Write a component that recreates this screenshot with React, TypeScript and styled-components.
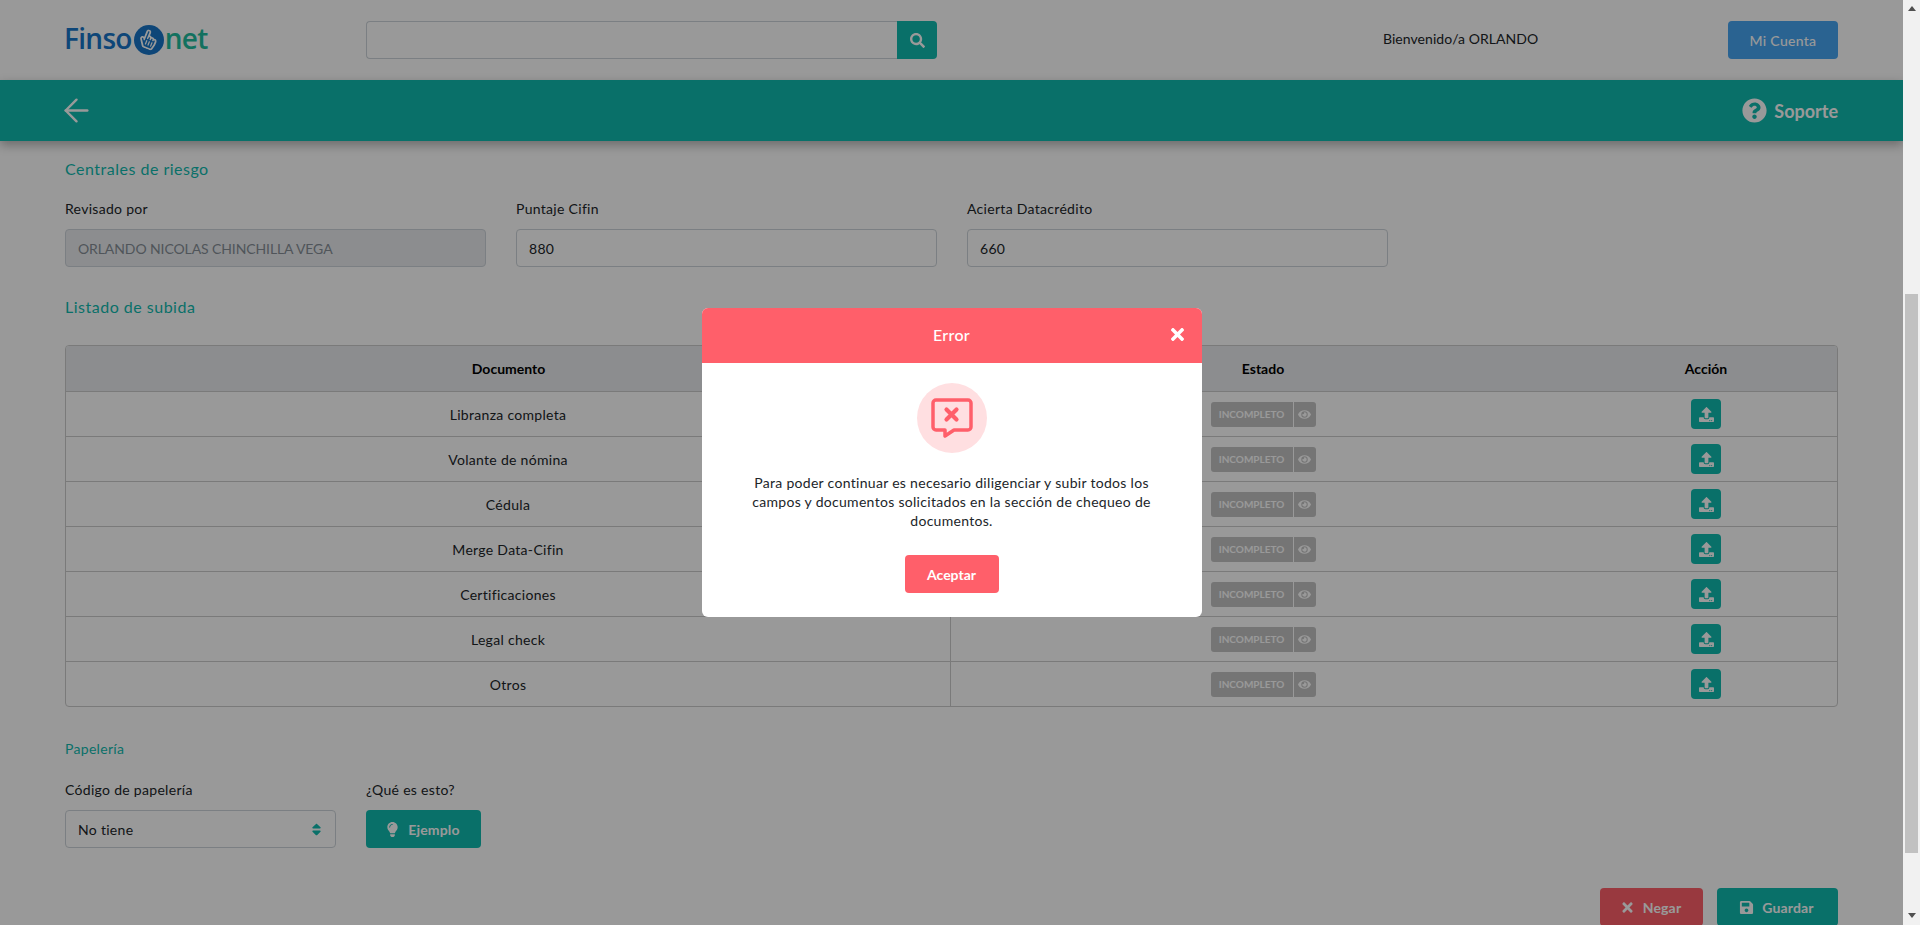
import styled, { createGlobalStyle } from "styled-components";
import {
  FaEye,
  FaLightbulb,
  FaQuestionCircle,
  FaRegHandPointer,
  FaSave,
  FaSearch,
  FaSort,
  FaTimes,
  FaUpload,
} from "react-icons/fa";
import { ArrowLeft } from "lucide-react";

const TEAL = "#0fbbaf";
const RED = "#ff5f6a";

const documents = [
  "Libranza completa",
  "Volante de nómina",
  "Cédula",
  "Merge Data-Cifin",
  "Certificaciones",
  "Legal check",
  "Otros",
];

const App = () => (
  <>
    <GlobalStyle />
    <Window>
      <Page>
        <Header>
          <Logo>
            <LogoBlue>Finso</LogoBlue>
            <LogoBadge>
              <FaRegHandPointer />
            </LogoBadge>
            <LogoGreen>net</LogoGreen>
          </Logo>
          <SearchBox>
            <SearchInput />
            <SearchButton>
              <FaSearch />
            </SearchButton>
          </SearchBox>
          <Welcome>Bienvenido/a ORLANDO</Welcome>
          <AccountButton>Mi Cuenta</AccountButton>
        </Header>

        <TealBar>
          <ArrowLeft size={37} strokeWidth={1.6} color="#fff" />
          <Support>
            <FaQuestionCircle />
            Soporte
          </Support>
        </TealBar>

        <Content>
          <SectionTitle>Centrales de riesgo</SectionTitle>
          <FieldRow>
            <Field>
              <Label>Revisado por</Label>
              <Input $disabled>ORLANDO NICOLAS CHINCHILLA VEGA</Input>
            </Field>
            <Field>
              <Label>Puntaje Cifin</Label>
              <Input>880</Input>
            </Field>
            <Field>
              <Label>Acierta Datacrédito</Label>
              <Input>660</Input>
            </Field>
          </FieldRow>

          <SectionTitle $second>Listado de subida</SectionTitle>
          <Table>
            <HeadRow>
              <HeadCell>Documento</HeadCell>
              <HeadCell>Estado</HeadCell>
              <HeadCell>Acción</HeadCell>
            </HeadRow>
            {documents.map((name) => (
              <Row key={name}>
                <NameCell>{name}</NameCell>
                <Cell>
                  <Badge>
                    <BadgeText>INCOMPLETO</BadgeText>
                    <BadgeEye>
                      <FaEye />
                    </BadgeEye>
                  </Badge>
                </Cell>
                <Cell>
                  <UploadButton>
                    <FaUpload />
                  </UploadButton>
                </Cell>
              </Row>
            ))}
          </Table>

          <SmallTitle>Papelería</SmallTitle>
          <PaperRow>
            <SelectField>
              <Label>Código de papelería</Label>
              <Select>
                No tiene
                <SelectArrows>
                  <FaSort />
                </SelectArrows>
              </Select>
            </SelectField>
            <div>
              <Label>¿Qué es esto?</Label>
              <ActionButton $color={TEAL} $width={115}>
                <FaLightbulb />
                Ejemplo
              </ActionButton>
            </div>
          </PaperRow>

          <Footer>
            <ActionButton $color={RED} $width={103}>
              <FaTimes />
              Negar
            </ActionButton>
            <ActionButton $color={TEAL} $width={121}>
              <FaSave />
              Guardar
            </ActionButton>
          </Footer>
        </Content>

        <Backdrop>
          <Modal>
            <ModalHead>
              Error
              <CloseIcon>
                <FaTimes />
              </CloseIcon>
            </ModalHead>
            <ModalBody>
              <ErrorCircle>
                <svg width="70" height="70" viewBox="0 0 70 70" fill="none">
                  <path
                    d="M19 17h32a3 3 0 0 1 3 3v24a3 3 0 0 1-3 3H37l-9 6v-6h-9a3 3 0 0 1-3-3V20a3 3 0 0 1 3-3z"
                    stroke={RED}
                    strokeWidth="3.5"
                    strokeLinejoin="round"
                  />
                  <path
                    d="M29.5 26.5l10 10M39.5 26.5l-10 10"
                    stroke={RED}
                    strokeWidth="4.2"
                    strokeLinecap="round"
                  />
                </svg>
              </ErrorCircle>
              <ModalText>
                Para poder continuar es necesario diligenciar y subir todos los
                campos y documentos solicitados en la sección de chequeo de
                documentos.
              </ModalText>
              <AcceptButton>Aceptar</AcceptButton>
            </ModalBody>
          </Modal>
        </Backdrop>
      </Page>

      <Scrollbar>
        <ArrowUp />
        <Thumb />
        <ArrowDown />
      </Scrollbar>
    </Window>
  </>
);

export default App;

const GlobalStyle = createGlobalStyle`
  * { box-sizing: border-box; }
  html, body { margin: 0; height: 100%; overflow: hidden; }
  body {
    font-family: "Lato", "Open Sans", sans-serif;
    font-size: 14px;
    letter-spacing: 0.3px;
    color: #212529;
    background: #fff;
  }
`;

const Window = styled.div`
  display: flex;
  height: 925px;
`;

const Page = styled.div`
  position: relative;
  flex: 1;
  min-width: 0;
  overflow: hidden;
`;

const Header = styled.header`
  display: flex;
  align-items: center;
  height: 80px;
  padding: 0 65px;
`;

const Logo = styled.div`
  display: flex;
  align-items: center;
  width: 302px;
  margin-top: -5px;
  margin-left: -1px;
  font-family: "Open Sans", sans-serif;
  font-size: 28px;
  font-weight: 600;
  letter-spacing: -0.7px;
`;

const LogoBlue = styled.span`
  color: #1876c8;
`;

const LogoGreen = styled.span`
  color: #1ebd9e;
`;

const LogoBadge = styled.span`
  display: flex;
  align-items: center;
  justify-content: center;
  width: 30px;
  height: 30px;
  margin: 0 1px 0 2px;
  border-radius: 50%;
  background: #1876c8;
  color: #fff;
  font-size: 19px;
  transform: translateY(2px);

  svg {
    transform: rotate(22deg);
  }
`;

const SearchBox = styled.div`
  display: flex;
  width: 571px;
  height: 38px;
`;

const SearchInput = styled.div`
  flex: 1;
  border: 1px solid #ced4da;
  border-right: 0;
  border-radius: 4px 0 0 4px;
  background: #fff;
`;

const SearchButton = styled.div`
  display: flex;
  align-items: center;
  justify-content: center;
  width: 40px;
  border-radius: 0 4px 4px 0;
  background: ${TEAL};
  color: #fff;
  font-size: 15px;
`;

const Welcome = styled.span`
  margin-left: 446px;
  margin-top: -3px;
  font-size: 14px;
  letter-spacing: 0.05px;
  color: #212529;
`;

const AccountButton = styled.button`
  width: 110px;
  height: 38px;
  margin-left: auto;
  border: 0;
  border-radius: 4px;
  background: #46a6f2;
  color: #fff;
  font: inherit;
  letter-spacing: 0.3px;
  font-weight: 500;
`;

const TealBar = styled.div`
  display: flex;
  align-items: center;
  justify-content: space-between;
  height: 61px;
  padding: 0 65px 0 58px;
  background: ${TEAL};
  box-shadow: 0 4px 10px rgba(0, 0, 0, 0.3);
`;

const Support = styled.div`
  display: flex;
  align-items: center;
  gap: 7px;
  color: #fff;
  font-size: 18px;
  font-weight: 700;
  letter-spacing: 0;

  svg {
    font-size: 25px;
  }
`;

const Content = styled.main`
  padding: 0 65px;
`;

const SectionTitle = styled.h2<{ $second?: boolean }>`
  margin: ${(p) => (p.$second ? "30px 0 28px" : "18px 0 20px")};
  font-size: 16px;
  line-height: 20px;
  font-weight: 400;
  letter-spacing: 0.5px;
  color: ${TEAL};
`;

const SmallTitle = styled.h3`
  margin: 33px 0 22px;
  font-size: 14px;
  line-height: 18px;
  font-weight: 400;
  color: ${TEAL};
`;

const FieldRow = styled.div`
  display: flex;
  gap: 30px;
`;

const Field = styled.div`
  width: 421px;
`;

const Label = styled.div`
  height: 20px;
  margin-bottom: 10px;
  font-size: 14px;
  line-height: 20px;
  color: #212529;
`;

const Input = styled.div<{ $disabled?: boolean }>`
  display: flex;
  align-items: center;
  height: 38px;
  padding: 0 12px;
  border: 1px solid #ced4da;
  border-radius: 4px;
  background: ${(p) => (p.$disabled ? "#e9ecef" : "#fff")};
  color: ${(p) => (p.$disabled ? "#868e96" : "#212529")};
  font-size: 14px;
  letter-spacing: ${(p) => (p.$disabled ? "-0.1px" : "0.3px")};
`;

const Table = styled.div`
  border: 1px solid #ccc;
  border-radius: 4px;
  overflow: hidden;
`;

const columns = "885px 624px 1fr";

const HeadRow = styled.div`
  display: grid;
  grid-template-columns: ${columns};
  height: 46px;
  background: #e9ecef;
  border-bottom: 1px solid #ccc;
`;

const HeadCell = styled.div`
  display: flex;
  align-items: center;
  justify-content: center;
  font-size: 14px;
  font-weight: 700;
  letter-spacing: 0;
  color: #000;
`;

const Row = styled.div`
  display: grid;
  grid-template-columns: ${columns};
  height: 45px;
  border-bottom: 1px solid #ccc;

  &:last-child {
    height: 44px;
    border-bottom: 0;
  }
`;

const Cell = styled.div`
  display: flex;
  align-items: center;
  justify-content: center;
  font-size: 14px;
  color: #212529;
`;

const NameCell = styled(Cell)`
  border-right: 1px solid #ccc;
`;

const Badge = styled.div`
  display: flex;
  gap: 1px;
  height: 25px;
`;

const BadgeText = styled.span`
  display: flex;
  align-items: center;
  justify-content: center;
  width: 82px;
  border-radius: 3px 0 0 3px;
  background: #c4c4c4;
  color: #fff;
  font-size: 10px;
  font-weight: 700;
  letter-spacing: 0;
`;

const BadgeEye = styled.span`
  display: flex;
  align-items: center;
  justify-content: center;
  width: 22px;
  border-radius: 0 3px 3px 0;
  background: #c4c4c4;
  color: #fff;
  font-size: 13px;
`;

const UploadButton = styled.div`
  display: flex;
  align-items: center;
  justify-content: center;
  width: 30px;
  height: 30px;
  border-radius: 4px;
  background: ${TEAL};
  color: #fff;
  font-size: 15px;
`;

const PaperRow = styled.div`
  display: flex;
  gap: 30px;
`;

const SelectField = styled.div`
  width: 271px;
`;

const Select = styled.div`
  display: flex;
  align-items: center;
  justify-content: space-between;
  height: 38px;
  padding: 0 11px 0 12px;
  border: 1px solid #ced4da;
  border-radius: 4px;
  background: #fff;
  font-size: 14px;
`;

const SelectArrows = styled.span`
  display: flex;
  color: ${TEAL};
  font-size: 15px;
`;

const ActionButton = styled.button<{ $color: string; $width: number }>`
  display: flex;
  align-items: center;
  justify-content: center;
  gap: 8px;
  width: ${(p) => p.$width}px;
  height: 38px;
  padding: 0 2px 0 0;
  border: 0;
  border-radius: 4px;
  background: ${(p) => p.$color};
  color: #fff;
  font: inherit;
  font-weight: 700;
  letter-spacing: 0.15px;

  svg {
    font-size: 15px;
  }
`;

const Footer = styled.div`
  display: flex;
  justify-content: flex-end;
  gap: 14px;
  margin-top: 40px;
`;

const Backdrop = styled.div`
  position: absolute;
  inset: 0;
  display: flex;
  justify-content: center;
  align-items: flex-start;
  padding-top: 308px;
  background: rgba(0, 0, 0, 0.4);
`;

const Modal = styled.div`
  width: 500px;
  border-radius: 6px;
  overflow: hidden;
  background: #fff;
`;

const ModalHead = styled.div`
  position: relative;
  display: flex;
  align-items: center;
  justify-content: center;
  height: 55px;
  padding-bottom: 2px;
  background: ${RED};
  color: #fff;
  font-size: 16px;
  font-weight: 500;
`;

const CloseIcon = styled.span`
  position: absolute;
  right: 15px;
  top: 17px;
  display: flex;
  font-size: 19px;
`;

const ModalBody = styled.div`
  display: flex;
  flex-direction: column;
  align-items: center;
  padding: 20px 40px 24px;
`;

const ErrorCircle = styled.div`
  display: flex;
  width: 70px;
  height: 70px;
  border-radius: 50%;
  background: #ffdfe1;
`;

const ModalText = styled.p`
  margin: 20px 0 0;
  font-size: 14px;
  line-height: 19px;
  text-align: center;
  color: #212529;
`;

const AcceptButton = styled.button`
  width: 94px;
  height: 38px;
  margin-top: 25px;
  border: 0;
  border-radius: 4px;
  background: ${RED};
  color: #fff;
  font: inherit;
  font-weight: 700;
  letter-spacing: 0;
`;

const Scrollbar = styled.div`
  display: flex;
  flex-direction: column;
  align-items: center;
  width: 17px;
  background: #f1f1f1;
`;

const ArrowUp = styled.div`
  width: 0;
  height: 0;
  margin-top: 6px;
  border-left: 4px solid transparent;
  border-right: 4px solid transparent;
  border-bottom: 5px solid #505050;
`;

const Thumb = styled.div`
  width: 13px;
  height: 559px;
  margin-top: 283px;
  background: #c1c1c1;
`;

const ArrowDown = styled.div`
  width: 0;
  height: 0;
  margin-top: 60px;
  border-left: 4px solid transparent;
  border-right: 4px solid transparent;
  border-top: 5px solid #505050;
`;
